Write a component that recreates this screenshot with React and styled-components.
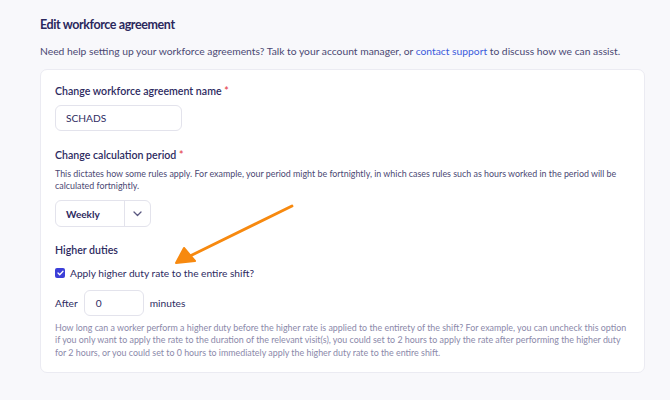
import React, { useState } from 'react'
import styled, { createGlobalStyle } from 'styled-components'

const GlobalStyle = createGlobalStyle`
  html, body {
    margin: 0;
    padding: 0;
    background: #f8f8fb;
    font-family: Lato, 'Noto Sans', sans-serif;
    color: #2e2b5f;
  }
`

const Page = styled.div`
  position: relative;
  width: 670px;
  height: 400px;
  padding: 15px 25px 0 40px;
  box-sizing: border-box;
  overflow: hidden;
`

const Title = styled.h1`
  margin: 0;
  font-size: 12.5px;
  font-weight: 700;
  letter-spacing: -0.4px;
  line-height: 20px;
  color: #2b285d;
`

const Intro = styled.p`
  margin: 9px 0 11px;
  font-size: 10.3px;
  line-height: 14px;
  color: #4b4873;
  white-space: nowrap;
`

const Link = styled.a`
  color: #3b5bdb;
  text-decoration: none;
`

const Card = styled.section`
  background: #fff;
  border: 1px solid #ebebf2;
  border-radius: 7px;
  padding: 14px 14px 13px;
  display: flex;
  flex-direction: column;
`

const Field = styled.div`
  display: flex;
  flex-direction: column;
  align-items: flex-start;
  margin-bottom: ${p => p.gap || 0}px;
`

const Label = styled.label`
  font-size: 10.6px;
  font-weight: 600;
  line-height: 14px;
  color: #2e2b5f;
  margin-bottom: ${p => p.mb ?? 7}px;
`

const Req = styled.span`
  color: #e5484d;
`

const Hint = styled.p`
  margin: 0 0 ${p => p.mb || 0}px;
  font-size: 8.9px;
  line-height: ${p => p.lh || 12}px;
  color: ${p => p.muted ? '#8b89aa' : '#4b4873'};
  white-space: nowrap;
`

const TextInput = styled.div`
  width: ${p => p.w}px;
  height: 26px;
  box-sizing: border-box;
  border: 1px solid #e3e3ec;
  border-radius: 6px;
  display: flex;
  align-items: center;
  padding-left: ${p => p.pl || 10}px;
  font-size: 10.2px;
  color: #2e2b5f;
  background: #fff;
`

const Select = styled.div`
  width: 96px;
  height: 27px;
  box-sizing: border-box;
  border: 1px solid #e3e3ec;
  border-radius: 6px;
  display: flex;
  align-items: stretch;
  font-size: 10px;
  font-weight: 700;
  color: #2e2b5f;
`

const SelectValue = styled.div`
  flex: 1;
  display: flex;
  align-items: center;
  padding-left: 10px;
`

const SelectToggle = styled.div`
  width: 25px;
  border-left: 1px solid #e3e3ec;
  display: flex;
  align-items: center;
  justify-content: center;
  color: #5a5880;
`

const CheckRow = styled.label`
  display: flex;
  align-items: center;
  gap: 5px;
  font-size: 10.2px;
  line-height: 16px;
  color: #2e2b5f;
  margin-bottom: 9px;
  cursor: pointer;
`

const Box = styled.span`
  width: 10px;
  height: 10px;
  box-sizing: border-box;
  border-radius: 2px;
  background: ${p => p.on ? '#3c3fd8' : '#fff'};
  border: ${p => p.on ? 'none' : '1px solid #c9c8d8'};
  display: flex;
  align-items: center;
  justify-content: center;
`

const InlineRow = styled.div`
  display: flex;
  align-items: center;
  gap: 6px;
  font-size: 10.2px;
  color: #2e2b5f;
  margin-bottom: 6px;
`

const Arrow = styled.svg`
  position: absolute;
  left: 0;
  top: 0;
  pointer-events: none;
`

export default function App() {
  const [checked, setChecked] = useState(true)

  return (
    <Page>
      <GlobalStyle />
      <Title>Edit workforce agreement</Title>
      <Intro>
        Need help setting up your workforce agreements? Talk to your account manager, or{' '}
        <Link href="#">contact support</Link> to discuss how we can assist.
      </Intro>
      <Card>
        <Field gap={17}>
          <Label>Change workforce agreement name <Req>*</Req></Label>
          <TextInput w={127}>SCHADS</TextInput>
        </Field>
        <Field gap={16}>
          <Label mb={6}>Change calculation period <Req>*</Req></Label>
          <Hint mb={8}>
            This dictates how some rules apply. For example, your period might be fortnightly, in which cases rules such as hours worked in the period will be
            <br />
            calculated fortnightly.
          </Hint>
          <Select>
            <SelectValue>Weekly</SelectValue>
            <SelectToggle>
              <svg width="9" height="6" viewBox="0 0 9 6" fill="none">
                <path d="M1 1l3.5 3.5L8 1" stroke="currentColor" strokeWidth="1.3" strokeLinecap="round" strokeLinejoin="round" />
              </svg>
            </SelectToggle>
          </Select>
        </Field>
        <Field>
          <Label mb={8}>Higher duties</Label>
          <CheckRow onClick={() => setChecked(!checked)}>
            <Box on={checked ? 1 : 0}>
              {checked && (
                <svg width="7" height="6" viewBox="0 0 7 6" fill="none">
                  <path d="M1 3l1.7 1.7L6 1.2" stroke="#fff" strokeWidth="1.3" strokeLinecap="round" strokeLinejoin="round" />
                </svg>
              )}
            </Box>
            Apply higher duty rate to the entire shift?
          </CheckRow>
          <InlineRow>
            After
            <TextInput w={60} pl={11}>0</TextInput>
            minutes
          </InlineRow>
          <Hint muted lh={12.4}>
            How long can a worker perform a higher duty before the higher rate is applied to the entirety of the shift? For example, you can uncheck this option
            <br />
            if you only want to apply the rate to the duration of the relevant visit(s), you could set to 2 hours to apply the rate after performing the higher duty
            <br />
            for 2 hours, or you could set to 0 hours to immediately apply the higher duty rate to the entire shift.
          </Hint>
        </Field>
      </Card>
      <Arrow width="670" height="400" viewBox="0 0 670 400">
        <path d="M292 206 L190 256" stroke="#f7890f" strokeWidth="2.8" strokeLinecap="round" />
        <path d="M176 263 L184 248 L195 261 Z" fill="#f7890f" stroke="#f7890f" strokeWidth="2" strokeLinejoin="round" />
      </Arrow>
    </Page>
  )
}
